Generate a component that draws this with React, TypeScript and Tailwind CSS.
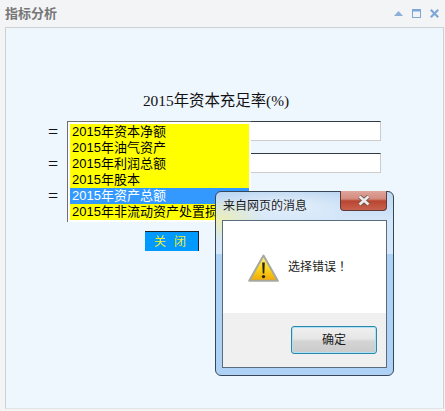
const zh = { fontFamily: '"Liberation Sans","Noto Sans CJK SC",sans-serif' };
const serif = { fontFamily: '"Liberation Serif","Noto Sans CJK SC",serif' };

const items = ['2015年资本净额', '2015年油气资产', '2015年利润总额', '2015年股本', '2015年资产总额', '2015年非流动资产处置损益'];

function HeaderIcons() {
  return (
    <div className="flex items-center gap-[9px] mr-[6px]">
      <svg width="9" height="9" viewBox="0 0 9 9"><path d="M0 7 L4.5 2 L9 7 Z" fill="#8cafd8" /></svg>
      <svg width="9" height="9" viewBox="0 0 9 9"><rect x="0.5" y="0.5" width="8" height="8" fill="none" stroke="#7fa6d6" /><rect x="0" y="0" width="9" height="2.5" fill="#7fa6d6" /></svg>
      <svg width="9" height="9" viewBox="0 0 9 9"><path d="M0.8 0.8 L8.2 8.2 M8.2 0.8 L0.8 8.2" stroke="#7fa6d6" strokeWidth="2.2" /></svg>
    </div>
  );
}

function Warning() {
  return (
    <svg width="31" height="29" viewBox="0 0 31 29">
      <defs>
        <linearGradient id="w" x1="0" y1="0" x2="0" y2="1">
          <stop offset="0" stopColor="#f6eea0" />
          <stop offset="0.5" stopColor="#fcd81c" />
          <stop offset="1" stopColor="#f0a806" />
        </linearGradient>
      </defs>
      <path d="M15.5 1.5 L29.8 26.8 L1.2 26.8 Z" fill="url(#w)" stroke="#a8a8a0" strokeWidth="2" strokeLinejoin="round" />
      <path d="M14.2 8.5 L16.8 8.5 L16.3 19.5 L14.7 19.5 Z" fill="#2a2412" />
      <circle cx="15.5" cy="22.6" r="1.7" fill="#2a2412" />
    </svg>
  );
}

function Dialog() {
  return (
    <div className="absolute left-[215px] top-[191px] w-[179px] h-[185px] rounded-[6px] border border-[#37475a] bg-[radial-gradient(ellipse_45px_22px_at_4px_28px,rgba(240,240,170,0.85),transparent),radial-gradient(ellipse_80px_18px_at_70px_14px,rgba(232,242,252,0.9),transparent),linear-gradient(180deg,#bcd7f1_0%,#d2e5f9_14%,#d6e8fb_34%,#aed2f6_34%,#aed2f6_100%)] px-[6px] pb-[7px] flex flex-col" style={zh}>
      <div className="h-[28px] shrink-0 flex items-start justify-between">
        <span className="text-[12px] leading-[16px] mt-[6px] ml-[1px] text-[#1b1b1b]">来自网页的消息</span>
        <div className="w-[47px] h-[20px] -mt-px rounded-b-[4px] border border-t-0 border-[#5e3a38] bg-[linear-gradient(180deg,#dfa49b_0%,#d38a7e_42%,#b8452f_52%,#c9614f_100%)] flex items-center justify-center">
          <svg width="14" height="11" viewBox="0 0 14 11"><path d="M2.5 1.5 L11.5 9.5 M11.5 1.5 L2.5 9.5" stroke="#5b4a48" strokeWidth="4.2" /><path d="M2.5 1.5 L11.5 9.5 M11.5 1.5 L2.5 9.5" stroke="#eeeae8" strokeWidth="2.8" /></svg>
        </div>
      </div>
      <div className="flex-1 border border-[#5a6b7d] bg-white flex flex-col">
        <div className="h-[92px] shrink-0 flex items-start pl-[25px] pt-[33px] gap-[9px]">
          <Warning />
          <span className="text-[12px] leading-[16px] mt-[4px] text-[#1b1b1b]">选择错误<span style={{ fontFamily: '"Noto Sans CJK TC",sans-serif' }}>！</span></span>
        </div>
        <div className="flex-1 bg-[#f0f0f0] flex justify-end items-start pt-[13px] pr-[9px]">
          <div className="w-[86px] h-[28px] rounded-[3px] border border-[#2f86ad] shadow-[inset_0_0_0_1px_#a9e3f5] bg-[linear-gradient(180deg,#f0f0f0_0%,#e6e6e6_45%,#d4d4d4_55%,#cbcbcb_100%)] flex items-center justify-center text-[12px] text-[#1b1b1b]">确定</div>
        </div>
      </div>
    </div>
  );
}

export default function App() {
  return (
    <div className="relative w-[445px] h-[411px] overflow-hidden bg-[#f3f4f6] flex flex-col" style={zh}>
      <div className="h-[27px] shrink-0 flex items-center justify-between pl-[5px]">
        <span className="text-[13px] font-bold text-[#777777]">指标分析</span>
        <HeaderIcons />
      </div>
      <div className="w-[439px] ml-[5px] h-[382px] border border-[#d0d0d0] border-b-[#e4e4e4] bg-[#eef6fe] flex flex-col items-center pt-[64px]">
        <div className="text-[15.4px] leading-[18px] text-[#111111] ml-[-17px]" style={serif}>2015年资本充足率(%)</div>
        <div className="flex self-start mt-[11px] ml-[42px]">
          <div className="w-[19px] flex flex-col -mt-[5px] text-[18px] leading-[32px] text-[#111111]" style={serif}>
            <span>=</span><span>=</span><span>=</span>
          </div>
          <div className="w-[184px] h-[101px] bg-white border-t border-l border-[#6f6f6f] pt-[2px] pl-[2px] pr-[2px] overflow-hidden">
            {items.map((t, i) => (
              <div key={t} className={`h-[16px] leading-[16px] text-[13px] pl-[2px] whitespace-nowrap overflow-hidden ${i === 4 ? 'bg-[#3399ff] text-white' : 'bg-[#ffff00] text-black'}`}>{t}</div>
            ))}
          </div>
          <div className="flex flex-col gap-[12px]">
            <div className="w-[130px] h-[20px] bg-white border-t border-r border-b border-t-[#333a44] border-r-[#cccccc] border-b-[#cccccc]" />
            <div className="w-[130px] h-[20px] bg-white border-t border-r border-b border-t-[#333a44] border-r-[#cccccc] border-b-[#cccccc]" />
          </div>
        </div>
        <div className="self-start ml-[139px] mt-[9px] w-[54px] h-[20px] bg-[#0099ff] border-t border-r border-[#222222] text-[#eef02e] text-[12px] flex items-center justify-center gap-[8px] pr-[3px]"><span>关</span><span>闭</span></div>
      </div>
      <Dialog />
    </div>
  );
}
